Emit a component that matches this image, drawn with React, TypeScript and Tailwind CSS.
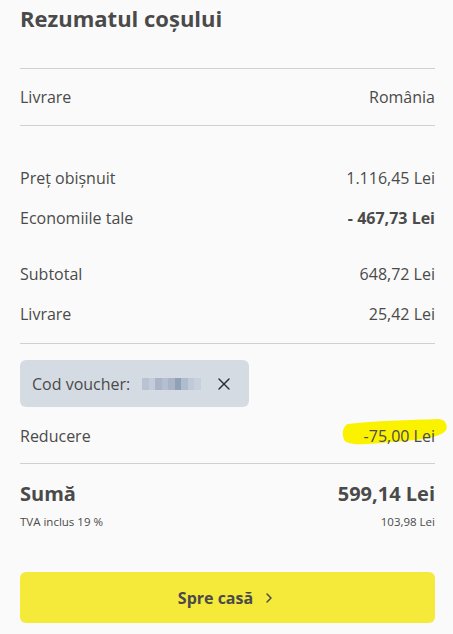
import { ChevronRight, X } from 'lucide-react'

type Row = { label: string; value: string; strong?: boolean }

const priceRows: Row[] = [
  { label: 'Preț obișnuit', value: '1.116,45 Lei' },
  { label: 'Economiile tale', value: '- 467,73 Lei', strong: true },
]

const subRows: Row[] = [
  { label: 'Subtotal', value: '648,72 Lei' },
  { label: 'Livrare', value: '25,42 Lei' },
]

// blurred voucher code, drawn as a row of pixel blocks
const codePixels = ['#b9c3d2', '#c3ccd8', '#aab6c8', '#b4bfcf', '#a9b5c7', '#8fa0b9', '#b0bccc', '#c0c9d6', '#c8d0db']

function LineRow({ label, value, strong }: Row) {
  return (
    <div className="flex items-center justify-between text-[16px] leading-6">
      <span>{label}</span>
      <span className={strong ? 'font-bold' : ''}>{value}</span>
    </div>
  )
}

export default function App() {
  return (
    <div
      className="w-[453px] h-[634px] bg-[#fafafa] text-[#4a4a4a] pl-5 pr-[18px] pt-1 overflow-hidden"
      style={{ fontFamily: '"Open Sans", "Noto Sans", sans-serif' }}
    >
      <h1 className="text-[22px] leading-[28px] font-bold">Rezumatul coșului</h1>

      <div className="mt-9 border-t border-[#d0d0d0]" />
      <div className="py-4">
        <LineRow label="Livrare" value="România" />
      </div>
      <div className="border-t border-[#d0d0d0]" />

      <div className="mt-10 flex flex-col gap-4">
        {priceRows.map((r) => (
          <LineRow key={r.label} {...r} />
        ))}
      </div>

      <div className="mt-8 flex flex-col gap-4">
        {subRows.map((r) => (
          <LineRow key={r.label} {...r} />
        ))}
      </div>

      <div className="mt-[17px] border-t border-[#d0d0d0]" />

      <div className="mt-4 w-[229px] h-[47px] rounded-md bg-[#d5dbe3] flex items-center pl-3 pr-[15px]">
        <span className="text-[16px]">Cod voucher:</span>
        <div className="ml-3 flex h-[12px]">
          {codePixels.map((c, i) => (
            <span key={i} className="w-[6.5px] h-full" style={{ backgroundColor: c }} />
          ))}
        </div>
        <X size={20} strokeWidth={1.6} className="ml-auto text-[#2b2b2b]" />
      </div>

      <div className="mt-[17px] flex items-center justify-between text-[16px] leading-6">
        <span>Reducere</span>
        <span className="relative">
          <svg
            className="absolute -left-[22px] -top-[6px]"
            width="106"
            height="30"
            viewBox="0 0 106 30"
          >
            <path
              d="M6 6 C30 3 70 2 96 1 C104 1 106 8 104 12 C100 19 80 22 50 24 C30 26 12 28 4 24 C-1 20 0 8 6 6 Z"
              fill="#fbf200"
            />
          </svg>
          <span className="relative">-75,00 Lei</span>
        </span>
      </div>

      <div className="mt-[15px] border-t border-[#d0d0d0]" />

      <div className="mt-4 flex items-center justify-between text-[20px] leading-7 font-bold">
        <span>Sumă</span>
        <span>599,14 Lei</span>
      </div>
      <div className="mt-1.5 flex items-center justify-between text-[11.5px] leading-4">
        <span>TVA inclus 19 %</span>
        <span>103,98 Lei</span>
      </div>

      <button className="mt-[42px] w-full h-[51px] rounded-md bg-[#f5e93a] flex items-center justify-center gap-2 text-[16px] font-bold text-[#4a4a4a]">
        Spre casă
        <ChevronRight size={16} strokeWidth={2.2} />
      </button>
    </div>
  )
}
